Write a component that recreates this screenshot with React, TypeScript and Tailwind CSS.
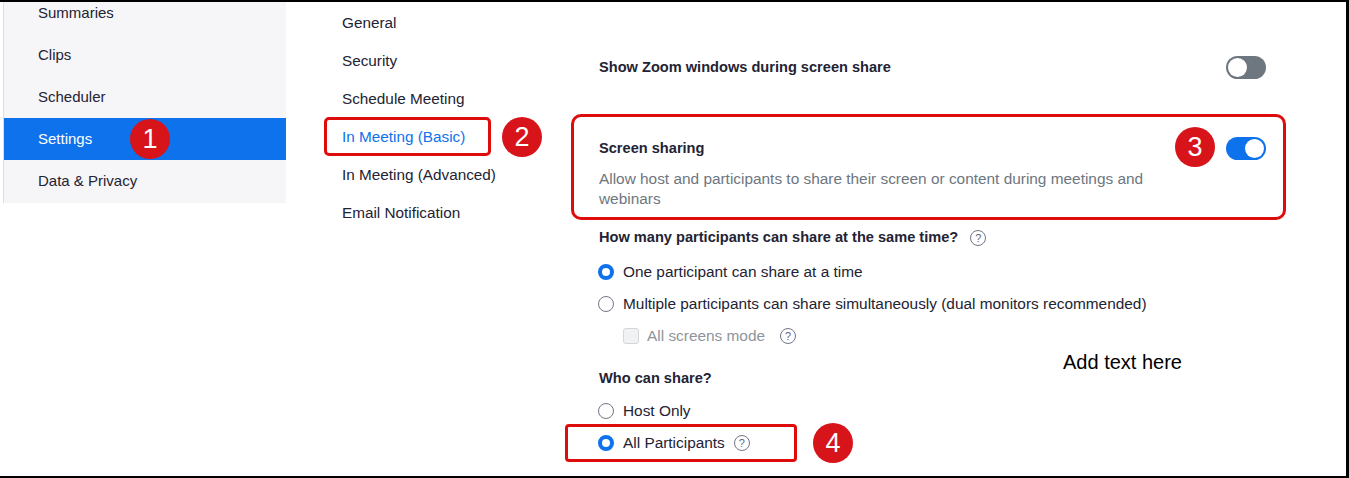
import React from 'react'

const sidebarItems = ['Summaries', 'Clips', 'Scheduler', 'Settings', 'Data & Privacy']
const navItems = [
  'General',
  'Security',
  'Schedule Meeting',
  'In Meeting (Basic)',
  'In Meeting (Advanced)',
  'Email Notification',
]

function Toggle({ on }: { on: boolean }) {
  return (
    <div
      className={`relative w-[40px] h-[23px] rounded-full ${on ? 'bg-[#0e72ed]' : 'bg-[#6e7680]'}`}
    >
      <div
        className={`absolute top-[2px] w-[19px] h-[19px] rounded-full bg-white ${on ? 'left-[19px]' : 'left-[2px]'}`}
      />
    </div>
  )
}

function Radio({ checked }: { checked: boolean }) {
  return checked ? (
    <span className="w-[16px] h-[16px] rounded-full border-[4.5px] border-[#0e72ed] bg-white shrink-0" />
  ) : (
    <span className="w-[16px] h-[16px] rounded-full border border-[#747487] bg-white shrink-0" />
  )
}

function Help() {
  return (
    <span className="w-[16px] h-[16px] rounded-full border-[1.5px] border-[#747487] text-[#5f6570] text-[11px] leading-none flex items-center justify-center shrink-0">
      ?
    </span>
  )
}

function Badge({ n, className }: { n: number; className: string }) {
  // numbered annotation marker
  return (
    <div
      className={`absolute w-[40px] h-[40px] rounded-full bg-[#d8141b] text-white text-[27px] leading-none flex items-center justify-center ${className}`}
    >
      {n}
    </div>
  )
}

export default function App() {
  return (
    <div className="relative w-[1349px] h-[478px] bg-white border-t-2 border-r-[3px] border-b-2 border-black overflow-hidden flex font-['Liberation_Sans',Arial,sans-serif] text-[#232333]">
      {/* left app sidebar */}
      <div className="ml-[3px] w-[283px] h-[201px] border-l border-[#dedede] bg-[#f6f6f8] overflow-hidden shrink-0">
        <div className="-mt-[10px]">
          {sidebarItems.map((item) => (
            <div
              key={item}
              className={`h-[42px] flex items-center pl-[34px] text-[15px] ${item === 'Settings' ? 'bg-[#0e72ed] text-white' : ''}`}
            >
              {item}
            </div>
          ))}
        </div>
      </div>

      {/* settings nav */}
      <div className="w-[285px] pl-[56px] pt-[2px] shrink-0">
        {navItems.map((item) => (
          <div
            key={item}
            className={`h-[38px] flex items-center text-[15.3px] ${item === 'In Meeting (Basic)' ? 'text-[#0e72ed]' : ''}`}
          >
            {item}
          </div>
        ))}
      </div>

      {/* content */}
      <div className="pl-[28px] w-[695px] shrink-0 text-[15.4px]">
        <div className="mt-[53px] h-[24px] flex items-center justify-between">
          <span className="font-bold text-[14.6px] pt-[2px]">Show Zoom windows during screen share</span>
          <Toggle on={false} />
        </div>

        <div className="mt-[57px] h-[24px] flex items-center justify-between">
          <span className="font-bold text-[14.6px] pt-[1px]">Screen sharing</span>
          <Toggle on={true} />
        </div>
        <p className="mt-[9px] w-[565px] leading-[20px] text-[#6e7680]">
          Allow host and participants to share their screen or content during meetings and webinars
        </p>

        <div className="mt-[19px] h-[20px] flex items-center gap-[12px]">
          <span className="font-bold text-[14.6px]">
            How many participants can share at the same time?
          </span>
          <Help />
        </div>
        <div className="mt-[14px] h-[20px] flex items-center gap-[9px] -ml-[1px]">
          <Radio checked={true} />
          <span>One participant can share at a time</span>
        </div>
        <div className="mt-[12px] h-[20px] flex items-center gap-[9px] -ml-[1px]">
          <Radio checked={false} />
          <span>Multiple participants can share simultaneously (dual monitors recommended)</span>
        </div>
        <div className="mt-[12px] h-[20px] flex items-center pl-[24px]">
          <span className="w-[16px] h-[16px] rounded-[3px] border border-[#d4d6da] bg-[#f1f2f4] shrink-0" />
          <span className="ml-[8px] text-[#8f949b]">All screens mode</span>
          <span className="ml-[15px]">
            <Help />
          </span>
        </div>

        <div className="mt-[23px] h-[20px] flex items-center">
          <span className="font-bold text-[14.6px]">Who can share?</span>
        </div>
        <div className="mt-[12px] h-[20px] flex items-center gap-[9px] -ml-[1px]">
          <Radio checked={false} />
          <span>Host Only</span>
        </div>
        <div className="mt-[12px] h-[20px] flex items-center gap-[9px] -ml-[1px]">
          <Radio checked={true} />
          <span>All Participants</span>
          <span className="ml-0">
            <Help />
          </span>
        </div>
      </div>

      {/* annotations */}
      <div className="absolute left-[324px] top-[115px] w-[167px] h-[39px] border-[3px] border-[#df0c0c] rounded-[5px]" />
      <div className="absolute left-[571px] top-[112px] w-[715px] h-[106px] border-[3px] border-[#df0c0c] rounded-[10px]" />
      <div className="absolute left-[565px] top-[422px] w-[232px] h-[38px] border-[3px] border-[#df0c0c] rounded-[4px]" />
      <Badge n={1} className="left-[130px] top-[117px]" />
      <Badge n={2} className="left-[502px] top-[115px]" />
      <Badge n={3} className="left-[1175px] top-[125px]" />
      <Badge n={4} className="left-[813px] top-[421px]" />
      <div className="absolute left-[1063px] top-[349px] text-[20px] leading-[22px] text-black">
        Add text here
      </div>
    </div>
  )
}
